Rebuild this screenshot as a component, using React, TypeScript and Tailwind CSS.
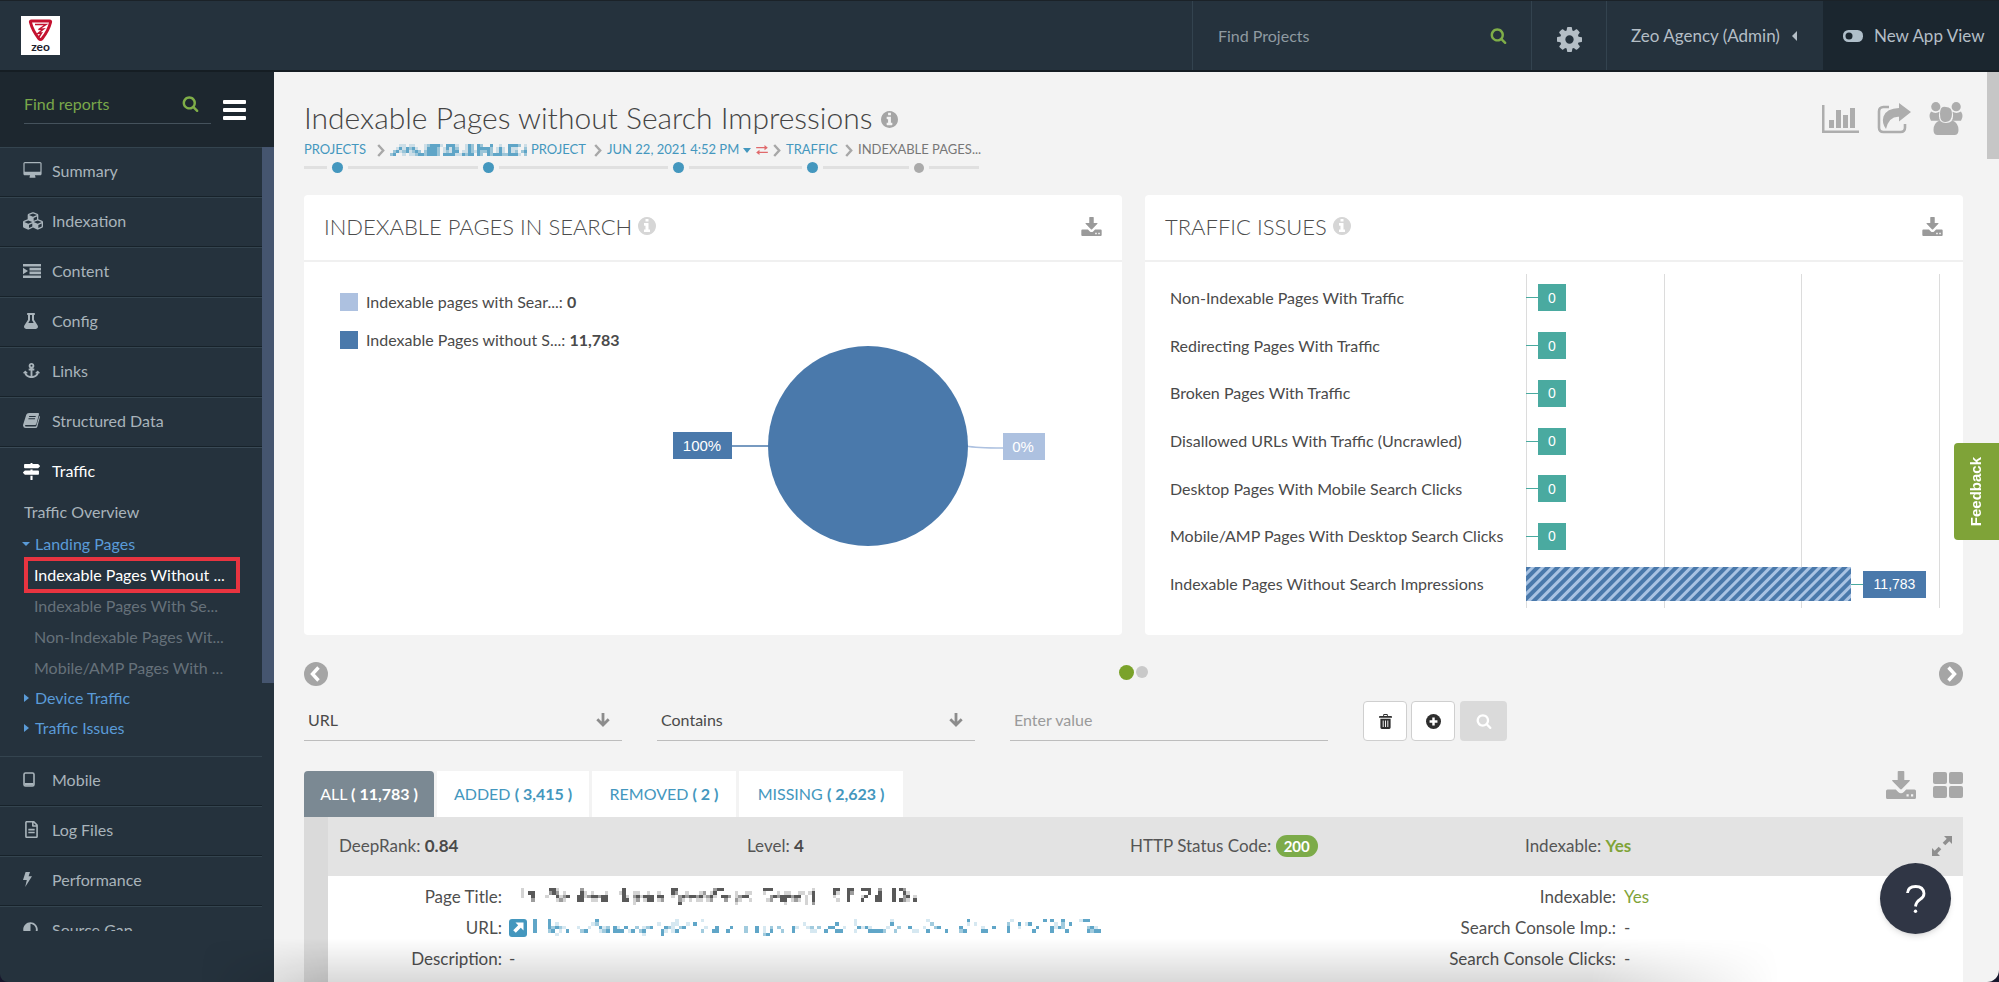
import type { ReactNode } from "react";
import { FaAnchor, FaCubes, FaFlask, FaMapSigns, FaAdjust, FaRegFileAlt } from "react-icons/fa";

type IconProps = { className?: string };

/* ---------- icons ---------- */

const SearchIcon = ({ className }: IconProps) => (
  <svg viewBox="0 0 1792 1792" className={className} fill="currentColor" aria-hidden="true">
    <path d="M1216 832q0-185-131.5-316.5t-316.5-131.5-316.5 131.5-131.5 316.5 131.5 316.5 316.5 131.5 316.5-131.5 131.5-316.5zm512 832q0 52-38 90t-90 38q-54 0-90-38l-343-342q-179 124-399 124-143 0-273.5-55.5t-225-150-150-225-55.5-273.5 55.5-273.5 150-225 225-150 273.5-55.5 273.5 55.5 225 150 150 225 55.5 273.5q0 220-124 399l343 343q37 37 37 90z" />
  </svg>
);

const CogIcon = ({ className }: IconProps) => (
  <svg viewBox="128 128 1536 1536" className={className} fill="currentColor" aria-hidden="true">
    <path d="M1152 896q0-106-75-181t-181-75-181 75-75 181 75 181 181 75 181-75 75-181zm512-109v222q0 12-8 23t-20 13l-185 28q-19 54-39 91 35 50 107 138 10 12 10 25t-9 23q-27 37-99 108t-94 71q-12 0-26-9l-138-108q-44 23-91 38-16 136-29 186-7 28-36 28h-222q-14 0-24.5-8.5t-11.5-21.5l-28-184q-49-16-90-37l-141 107q-10 9-25 9-14 0-25-11-126-114-165-168-7-10-7-23 0-12 8-23 15-21 51-66.5t54-70.5q-27-50-41-99l-183-27q-13-2-21-12.5t-8-23.5v-222q0-12 8-23t19-13l186-28q14-46 39-92-40-57-107-138-10-12-10-24 0-10 9-23 26-36 98.5-107.5t94.5-71.5q13 0 26 10l138 107q44-23 91-38 16-136 29-186 7-28 36-28h222q14 0 24.5 8.5t11.5 21.5l28 184q49 16 90 37l142-107q9-9 24-9 13 0 25 10 129 119 165 170 7 8 7 22 0 12-8 23-15 21-51 66.5t-54 70.5q26 50 41 98l183 28q13 2 21 12.5t8 23.5z" />
  </svg>
);

const InfoIcon = ({ className }: IconProps) => (
  <svg viewBox="128 128 1536 1536" className={className} fill="currentColor" aria-hidden="true">
    <path d="M1152 1376v-160q0-14-9-23t-23-9h-96v-512q0-14-9-23t-23-9h-320q-14 0-23 9t-9 23v160q0 14 9 23t23 9h96v320h-96q-14 0-23 9t-9 23v160q0 14 9 23t23 9h448q14 0 23-9t9-23zm-128-896v-160q0-14-9-23t-23-9h-192q-14 0-23 9t-9 23v160q0 14 9 23t23 9h192q14 0 23-9t9-23zm640 416q0 209-103 385.5t-279.5 279.5-385.5 103-385.5-103-279.5-279.5-103-385.5 103-385.5 279.5-279.5 385.5-103 385.5 103 279.5 279.5 103 385.5z" />
  </svg>
);

const DesktopIcon = ({ className }: IconProps) => (
  <svg viewBox="0 0 1920 1792" className={className} fill="currentColor" aria-hidden="true">
    <path d="M1792 992v-832q0-13-9.5-22.5t-22.5-9.5h-1600q-13 0-22.5 9.5t-9.5 22.5v832q0 13 9.5 22.5t22.5 9.5h1600q13 0 22.5-9.5t9.5-22.5zm128-832v1088q0 66-47 113t-113 47h-544q0 37 16 77.5t32 71 16 43.5q0 26-19 45t-45 19h-512q-26 0-45-19t-19-45q0-14 16-44t32-70 16-78h-544q-66 0-113-47t-47-113v-1088q0-66 47-113t113-47h1600q66 0 113 47t47 113z" />
  </svg>
);

const IndentIcon = ({ className }: IconProps) => (
  <svg viewBox="0 0 18 14" className={className} fill="currentColor" aria-hidden="true">
    <path d="M0 0h18v2.600H0zM6.500 3.800h11.500v2.600H6.500zM6.500 7.600h11.500v2.600H6.500zM0 11.400h18v2.600H0zM0 3.800l5 3.200-5 3.200z" />
  </svg>
);

const BookIcon = ({ className }: IconProps) => (
  <svg viewBox="0 0 18 16" className={className} fill="currentColor" aria-hidden="true">
    <path
      fillRule="evenodd"
      d="M6.400 0H16q1.300 0 1 1.200L14.200 11.600Q13.900 12.800 12.700 12.800H3q-1 0-1 .8t1 .8h10.300q.7 0 .9-.7L17.300 3.100q.9.400.6 1.500L15.300 14.400Q14.900 16 13.300 16H2.800Q.3 16 0 13.500q-.1-.7.2-1.500L3.400 1.900Q4 .2 6.400 0zM6.600 3.200l-.3 1h7l.3-1zM5.900 5.600l-.3 1h7l.3-1z"
    />
  </svg>
);

const TabletIcon = ({ className }: IconProps) => (
  <svg viewBox="0 0 12 15" className={className} aria-hidden="true">
    <rect x="1" y="1" width="10" height="13" rx="1.500" fill="none" stroke="currentColor" strokeWidth="1.600" />
    <path d="M1.500 11h9v2.500h-9z" fill="currentColor" />
  </svg>
);

const FlashIcon = ({ className }: IconProps) => (
  <svg viewBox="0 0 9 15" className={className} fill="currentColor" aria-hidden="true">
    <path d="M2.600 0H7L5.600 4.300H9L2.200 15l1.600-7H0z" />
  </svg>
);

const DownloadIcon = ({ className }: IconProps) => (
  <svg viewBox="0 0 30 28" className={className} fill="currentColor" aria-hidden="true">
    <path
      fillRule="evenodd"
      d="M12.500 0h5q.8 0 .8.8V9h4.900q1.200 0 .5.9l-7.800 8.200q-.9.900-1.800 0L6.300 9.900Q5.600 9 6.800 9h4.900V.8q0-.8.8-.8zM1.500 18.500h8.300l2.400 2.400q2.800 2.600 5.600 0l2.400-2.400h8.300q1.500 0 1.500 1.500v6.500q0 1.500-1.500 1.500h-27Q0 28 0 26.500V20q0-1.500 1.500-1.500zM20.500 23.200v2.200h2.200v-2.200zM25 23.200v2.200h2.200v-2.200z"
    />
  </svg>
);

const GridIcon = ({ className }: IconProps) => (
  <svg viewBox="0 0 30 26" className={className} fill="currentColor" aria-hidden="true">
    <rect width="14" height="12" rx="2" />
    <rect x="16" width="14" height="12" rx="2" />
    <rect y="14" width="14" height="12" rx="2" />
    <rect x="16" y="14" width="14" height="12" rx="2" />
  </svg>
);

const BarChartIcon = ({ className }: IconProps) => (
  <svg viewBox="0 0 37 28" className={className} fill="currentColor" aria-hidden="true">
    <path d="M0 0h2.500v25.500H37V28H0zM7 15h5v8H7zM14 5h5v18h-5zM21 10h5v13h-5zM28 3h5v20h-5z" />
  </svg>
);

const ShareIcon = ({ className }: IconProps) => (
  <svg viewBox="0 0 34 31" className={className} aria-hidden="true">
    <path
      d="M12 4H6.500Q2 4 2 8.500v16Q2 29 6.500 29h17q4.500 0 4.500-4.500V21"
      fill="none"
      stroke="currentColor"
      strokeWidth="2.600"
    />
    <path d="M22 0l12 9-12 9.500v-4.800q-10-.6-13 12.300-4.500-6-2.500-12.500Q9.500 5.300 22 5z" fill="currentColor" />
  </svg>
);

const GroupIcon = ({ className }: IconProps) => (
  <svg viewBox="0 0 34 33" className={className} fill="currentColor" aria-hidden="true">
    <circle cx="6.800" cy="4.700" r="4.600" />
    <circle cx="27.200" cy="4.700" r="4.600" />
    <path d="M2 9.500q4.500 2.600 8.500.3-1.500 5.500 1 9H2Q-1 14 2 9.500zM32 9.500q-4.500 2.600-8.500.3 1.500 5.500-1 9H32q3-4.800 0-9.300z" />
    <path d="M17 5q6 0 6 7t-6 8-6-8 6-7z" />
    <path d="M10.500 18.500q6.500 5 13 0 6 2.500 6 9.500 0 5-4 5h-17q-4 0-4-5 0-7 6-9.500z" />
  </svg>
);

const ChevronIcon = ({ className }: IconProps) => (
  <svg viewBox="0 0 8 13" className={className} fill="none" stroke="currentColor" strokeWidth="2.400" aria-hidden="true">
    <path d="M1.200 1l5 5.500-5 5.500" />
  </svg>
);

const SwapIcon = ({ className }: IconProps) => (
  <svg viewBox="0 0 14 12" className={className} fill="currentColor" aria-hidden="true">
    <path d="M0 2.500h10V0l4 3.200-4 3.200V4H0zM14 8H4V5.700L0 8.900 4 12V9.600h10z" />
  </svg>
);

const ArrowDownIcon = ({ className }: IconProps) => (
  <svg viewBox="0 0 14 14" className={className} fill="none" stroke="currentColor" strokeWidth="2.800" aria-hidden="true">
    <path d="M7 0v12M1.300 6.300L7 12l5.700-5.700" />
  </svg>
);

const CircleArrow = ({ flip }: { flip?: boolean }) => (
  <svg viewBox="0 0 24 24" className={flip ? "size-6 rotate-180" : "size-6"} aria-hidden="true">
    <circle cx="12" cy="12" r="12" fill="#a5a5a5" />
    <path d="M14.500 5.500L8.500 12l6 6.500" fill="none" stroke="#fff" strokeWidth="3.400" />
  </svg>
);

const TrashIcon = ({ className }: IconProps) => (
  <svg viewBox="0 0 14 16" className={className} fill="currentColor" aria-hidden="true">
    <path
      fillRule="evenodd"
      d="M4.500 2V1q0-1 1-1h3q1 0 1 1v1H13q1 0 1 1v1H0V3q0-1 1-1zm1 0h3V1h-3zM1.500 5h11v9.500q0 1.500-1.500 1.500H3q-1.500 0-1.500-1.500zM4 7v7h1V7zm2.500 0v7h1V7zM9 7v7h1V7z"
    />
  </svg>
);

const PlusCircleIcon = ({ className }: IconProps) => (
  <svg viewBox="0 0 16 16" className={className} aria-hidden="true">
    <circle cx="8" cy="8" r="8" fill="currentColor" />
    <path d="M8 3.800v8.400M3.800 8h8.400" stroke="#fff" strokeWidth="2.600" />
  </svg>
);

const ExpandIcon = ({ className }: IconProps) => (
  <svg viewBox="0 0 20 20" className={className} fill="currentColor" aria-hidden="true">
    <path d="M12 0h8v8l-2.700-2.700-4 4-2.600-2.600 4-4zM8 20H0v-8l2.700 2.700 4-4 2.600 2.600-4 4z" />
  </svg>
);

const ExternalIcon = () => (
  <svg viewBox="0 0 18 18" className="size-[18px]" aria-hidden="true">
    <rect width="18" height="18" rx="3" fill="#4497be" />
    <path d="M6.500 3.500h8v8l-2.700-2.700-5 5-2.600-2.600 5-5z" fill="#fff" />
  </svg>
);

const ToggleIcon = () => (
  <svg viewBox="0 0 20 12" className="h-3 w-5" aria-hidden="true">
    <rect width="20" height="12" rx="5.500" fill="#b0bfca" />
    <circle cx="6" cy="6" r="3.500" fill="#1b262f" />
  </svg>
);

const Logo = () => (
  <svg viewBox="0 0 39 39" className="size-[39px]" role="img" aria-label="Zeo">
    <rect width="39" height="39" fill="#fff" />
    <path
      d="M10.500 5h18q1.500 0 1 1.500-2 8-8.300 16-1.700 2-3.400 0-6.300-8-8.300-16Q9 5 10.500 5z"
      fill="#fff"
      stroke="#c4122f"
      strokeWidth="3"
    />
    <path d="M14 8.500h11l-7.500 5 5-.5-5.500 4.500 3.500-.5-2.500 4" fill="none" stroke="#c4122f" strokeWidth="1.500" />
    <text x="19.500" y="35" textAnchor="middle" className="font-[Lato,sans-serif] text-[12px] font-bold" fill="#20202c">
      zeo
    </text>
  </svg>
);

/* ---------- redacted strings, drawn as a mosaic ---------- */

const shades: Record<string, number> = { "#": 0.85, "+": 0.5, ".": 0.22 };

function Mosaic({ rows, className }: { rows: string[]; className: string }) {
  const cols = Math.max(...rows.map((r) => r.length));
  return (
    <svg
      viewBox={`0 0 ${cols} ${rows.length}`}
      preserveAspectRatio="none"
      shapeRendering="crispEdges"
      className={className}
      fill="currentColor"
      aria-hidden="true"
    >
      {rows.flatMap((row, y) =>
        row.split("").map((c, x) =>
          shades[c] ? <rect key={`${x}-${y}`} x={x} y={y} width="1" height="1" opacity={shades[c]} /> : null,
        ),
      )}
    </svg>
  );
}

const projectMosaic = [
  "   .. ..   .+###. ###.  .#+ #+  #  .  ###+ .",
  "  .#.#+#.  .###+ .#.#+  .#+ ####+ .#. #..  +",
  " +#.+#.+#+ +###+ .+.## ..#+.#++#+ .#. #.+ +#",
  "+#  . ..+##+###+ ####..#+## #+ #+###++###. +",
];

const titleMosaic = [
  " .       ##.      +           #             ##          +##           ###           .     ##  ##  ###  +   # #+  ",
  " . ##    +#+ .    #. .   .   .#  ..  .  .   #+  .   .+ .#     .  ..   .   . ..  .. .#     #.  #+    #  #   #  #. ",
  " .  #   .  #.+#  ##.+##+##    #. +#.### ##  . +#+##+#.+#. ##+ .+##      +#+###+## . #     .   #   .#  ##   #  +# .",
  "    +      .+.   ##  .. ##    ## .+ .## .+    +. . .. .+   +  +.  .    .+  ## .+. . #      .  #   #   ##   # #+. #",
  "                                 .            #               .             .     . +                            ",
];

const urlMosaic = [
  "#   #            #                     .      .                                         .         .         .          #           .        # #  #    .##  ",
  "#   # .         .+                .   ..  . #                             .        #    .         #          +         . .        +  # .#      . + #",
  "#   #+#+.   .  .  #.+ #. #  + .+#   #+. +#     .  #   #   +  # . + +   #.  .+ +  ##  .   #.#.    .  +  #   .  +#     #     .  #   #  .    #   #.#+      +#.",
  "#   +# . #   +#   .+# ### .# +#    #. .#      +  ##  #    +  # . #  +  #    ..  #  ##   .   ####+  +    ..  #    #   +#    ##     #      #    #   #     #+##",
  "      .                       .    #                           +#                                                                                            ",
];

/* ---------- sidebar ---------- */

function NavItem({ icon, children, active }: { icon: ReactNode; children: ReactNode; active?: boolean }) {
  return (
    <a
      href="#"
      className={
        active
          ? "flex h-[50px] items-center border-t border-[#3a4a56] pb-[3px] pl-[23px] text-white"
          : "flex h-[50px] items-center border-t border-b border-t-[#34444f] border-b-[#17222a] pb-[3px] pl-[23px] text-[#a9b4bb]"
      }
    >
      <span className="flex w-[29px] items-center">{icon}</span>
      {children}
    </a>
  );
}

function Sidebar() {
  return (
    <aside className="flex w-[274px] shrink-0 flex-col rounded-bl-lg bg-[#25323d] text-base">
      <div className="flex h-[75px] shrink-0 items-start bg-[#1d272f] pt-4 pl-6">
        <label className="flex h-9 w-[187px] items-center justify-between border-b border-[#45525c] pr-3 pb-1">
          <input
            aria-label="Find reports"
            placeholder="Find reports"
            className="w-36 bg-transparent outline-none placeholder:text-[#7aa74a]"
          />
          <SearchIcon className="size-[17px] text-[#7fae48]" />
        </label>
        <button aria-label="Toggle menu" className="mt-3 ml-3 flex w-[23px] flex-col gap-1">
          <span className="h-1 rounded-[1px] bg-white" />
          <span className="h-1 rounded-[1px] bg-white" />
          <span className="h-1 rounded-[1px] bg-white" />
        </button>
      </div>
      <div className="flex h-[784px] shrink-0 overflow-hidden">
        <nav className="flex-1">
          <NavItem icon={<DesktopIcon className="h-[17px] w-[19px]" />}>Summary</NavItem>
          <NavItem icon={<FaCubes className="size-5" />}>Indexation</NavItem>
          <NavItem icon={<IndentIcon className="h-3.5 w-[18px]" />}>Content</NavItem>
          <NavItem icon={<FaFlask className="size-4" />}>Config</NavItem>
          <NavItem icon={<FaAnchor className="size-[17px]" />}>Links</NavItem>
          <NavItem icon={<BookIcon className="h-[15px] w-[17px]" />}>Structured Data</NavItem>
          <NavItem active icon={<FaMapSigns className="size-[17px]" />}>Traffic</NavItem>
          <div className="flex flex-col pb-[13px] pl-6">
            <a href="#" className="mt-[3px] text-[#a9b4bb]">Traffic Overview</a>
            <a href="#" className="mt-2 flex items-center text-[#5a9bd8]">
              <span className="mr-1 -ml-0.5 w-2 border-x-4 border-t-4 border-x-transparent border-t-[#5a9bd8]" />
              <span className="pl-px">Landing Pages</span>
            </a>
            <a href="#" className="mt-px flex h-9 w-[216px] items-center border-4 border-[#e93440] pl-1.5 whitespace-nowrap text-white">
              Indexable Pages Without ...
            </a>
            <a href="#" className="-mt-[3px] ml-2.5 leading-[31px] text-[#66717a]">Indexable Pages With Se...</a>
            <a href="#" className="ml-2.5 leading-[31px] text-[#66717a]">Non-Indexable Pages Wit...</a>
            <a href="#" className="ml-2.5 leading-[31px] text-[#66717a]">Mobile/AMP Pages With ...</a>
            <a href="#" className="flex items-center leading-[30px] text-[#5a9bd8]">
              <span className="mr-1.5 border-y-4 border-l-[5px] border-y-transparent border-l-[#5a9bd8]" />
              Device Traffic
            </a>
            <a href="#" className="flex items-center leading-[30px] text-[#5a9bd8]">
              <span className="mr-1.5 border-y-4 border-l-[5px] border-y-transparent border-l-[#5a9bd8]" />
              Traffic Issues
            </a>
          </div>
          <NavItem icon={<TabletIcon className="h-[15px] w-3" />}>Mobile</NavItem>
          <NavItem icon={<FaRegFileAlt className="size-[17px]" />}>Log Files</NavItem>
          <NavItem icon={<FlashIcon className="h-[15px] w-[9px]" />}>Performance</NavItem>
          <NavItem icon={<FaAdjust className="size-[15px]" />}>Source Gap</NavItem>
        </nav>
        <div className="h-[536px] w-3 bg-[#45556f]" />
      </div>
    </aside>
  );
}

/* ---------- header ---------- */

function Header() {
  return (
    <header className="flex h-[72px] shrink-0 items-stretch justify-between border-t border-b-2 border-t-[#1b2228] border-b-[#151d23] bg-[#25323d] text-[17px] text-[#b4bec6]">
      <a href="#" className="flex items-center pl-[21px]">
        <Logo />
      </a>
      <div className="flex">
        <label className="flex w-[339px] items-center justify-between border-l border-[#33434f] pr-6 pl-[25px] text-base">
          <input aria-label="Find Projects" placeholder="Find Projects" className="bg-transparent outline-none placeholder:text-[#8f9aa1]" />
          <SearchIcon className="size-[17px] text-[#7fae48]" />
        </label>
        <button aria-label="Settings" className="flex w-[75px] items-center justify-center border-l border-[#33434f] pt-2">
          <CogIcon className="size-[25px]" />
        </button>
        <button className="flex w-[217px] items-center border-l border-[#33434f] pl-6">
          Zeo Agency (Admin)
          <span className="ml-3 border-y-[5px] border-r-[5px] border-y-transparent border-r-[#b4bec6]" />
        </button>
        <button className="flex w-44 items-center gap-[11px] bg-[#1b262f] pl-5 whitespace-nowrap">
          <ToggleIcon />
          New App View
        </button>
      </div>
    </header>
  );
}

/* ---------- main content ---------- */

const issues = [
  "Non-Indexable Pages With Traffic",
  "Redirecting Pages With Traffic",
  "Broken Pages With Traffic",
  "Disallowed URLs With Traffic (Uncrawled)",
  "Desktop Pages With Mobile Search Clicks",
  "Mobile/AMP Pages With Desktop Search Clicks",
];

function Crumb({ width, trail = "w-5", last, children }: { width: string; trail?: string; last?: boolean; children: ReactNode }) {
  return (
    <li className={`flex flex-col gap-0.5 ${width}`}>
      <span className="flex h-5 items-center whitespace-nowrap">
        {children}
        {!last && <ChevronIcon className="mr-[5px] ml-auto h-[13px] w-2 shrink-0 text-[#a8a8a8]" />}
      </span>
      <span className="flex h-[11px] items-center">
        <span className="h-[3px] flex-1 bg-[#e0e0e0]" />
        <span className={last ? "mx-[5px] size-2.5 rounded-full bg-[#aaaaaa]" : "mx-[5px] size-[11px] rounded-full bg-[#4497be]"} />
        <span className="h-[3px] flex-1 bg-[#e0e0e0]" />
        {!last && <span className={`h-[3px] bg-[#e0e0e0] ${trail}`} />}
      </span>
    </li>
  );
}

function Card({ title, children }: { title: string; children: ReactNode }) {
  return (
    <section className="flex h-[440px] flex-col rounded bg-white">
      <div className="flex h-[67px] shrink-0 items-center border-b-2 border-[#f0f0f0] px-5 pb-[3px]">
        <h2 className="text-[22px] font-light text-[#4c4c4c]">{title}</h2>
        <InfoIcon className="ml-1.5 size-[18px] text-[#d6d6d6]" />
        <button aria-label={`Download ${title}`} className="ml-auto">
          <DownloadIcon className="h-[19px] w-[21px] text-[#9a9a9a]" />
        </button>
      </div>
      {children}
    </section>
  );
}

function SearchCard() {
  return (
    <Card title="INDEXABLE PAGES IN SEARCH">
      <div className="flex flex-1 justify-between pt-7 pr-[77px] pl-9">
        <ul className="flex flex-col gap-[14px] text-base whitespace-nowrap text-[#4a4a4a]">
          <li className="flex h-6 items-center gap-2">
            <span className="size-[18px] bg-[#adc1e0]" />
            <span>Indexable pages with Sear...: <b>0</b></span>
          </li>
          <li className="flex h-6 items-center gap-2">
            <span className="size-[18px] bg-[#4a79ab]" />
            <span>Indexable Pages without S...: <b>11,783</b></span>
          </li>
        </ul>
        <svg viewBox="0 0 372 200" className="mt-14 h-[200px] w-[372px] shrink-0 font-['Liberation_Sans',sans-serif] text-[15px]">
          <path d="M59 100h40" stroke="#4a79ab" strokeWidth="1.500" />
          <path d="M293 100q10 2 37 2" stroke="#adc1e0" strokeWidth="1.500" fill="none" />
          <circle cx="195" cy="100" r="100" fill="#4a79ab" />
          <rect y="86" width="59" height="27" fill="#4a79ab" />
          <text x="29" y="105" textAnchor="middle" fill="#fff">100%</text>
          <rect x="330" y="87" width="42" height="27" fill="#adc1e0" />
          <text x="350" y="106" textAnchor="middle" fill="#fff">0%</text>
        </svg>
      </div>
    </Card>
  );
}

function IssuesCard() {
  return (
    <Card title="TRAFFIC ISSUES">
      <div className="relative mt-3 mr-[23px] flex h-[334px] flex-col text-base text-[#4a4a4a]">
        <div className="absolute inset-y-0 right-0 left-[381px] grid grid-cols-3 border-l border-[#dcdcdc]">
          <span className="border-r border-[#dcdcdc]" />
          <span className="border-r border-[#dcdcdc]" />
          <span className="border-r border-[#dcdcdc]" />
        </div>
        {issues.map((label) => (
          <div key={label} className="relative flex flex-1 items-center">
            <span className="w-[381px] shrink-0 pl-[25px] whitespace-nowrap">{label}</span>
            <span className="h-px w-3 bg-[#4aaaa0]" />
            <span className="flex h-[27px] w-7 items-center justify-center bg-[#4aaaa0] font-['Liberation_Sans',sans-serif] text-sm text-white">0</span>
          </div>
        ))}
        <div className="relative flex flex-1 items-center">
          <span className="w-[381px] shrink-0 pl-[25px] whitespace-nowrap">Indexable Pages Without Search Impressions</span>
          <span className="flex flex-1 items-center pr-3.5">
            <span className="h-[34px] flex-1 bg-[repeating-linear-gradient(135deg,#4a79ab_0px,#4a79ab_3px,#a9c3e3_4px,#a9c3e3_6px,#4a79ab_7px)]" />
            <span className="h-px w-3 bg-[#4aaaa0]" />
            <span className="flex h-[27px] w-[63px] items-center justify-center bg-[#4a79ab] font-['Liberation_Sans',sans-serif] text-sm text-white">11,783</span>
          </span>
        </div>
      </div>
    </Card>
  );
}

function FilterSelect({ label, value }: { label: string; value: string }) {
  return (
    <label className="flex h-[38px] w-[318px] items-center border-b border-[#bdbdbd] pr-3 pb-1 pl-1">
      <select aria-label={label} className="flex-1 appearance-none bg-transparent text-[#4a4a4a] outline-none">
        <option>{value}</option>
      </select>
      <ArrowDownIcon className="size-3.5 text-[#8c8c8c]" />
    </label>
  );
}

const tabs = [
  { name: "ALL", count: "11,783", width: "w-[130px]" },
  { name: "ADDED", count: "3,415", width: "w-[152px]" },
  { name: "REMOVED", count: "2", width: "w-[144px]" },
  { name: "MISSING", count: "2,623", width: "w-[164px]" },
];

function Results() {
  return (
    <section className="text-base">
      <div className="flex items-end justify-between">
        <div role="tablist" className="flex gap-[3px]">
          {tabs.map((t, i) => (
            <button
              key={t.name}
              role="tab"
              aria-selected={i === 0}
              className={`h-[46px] whitespace-nowrap ${t.width} ${i === 0 ? "rounded-t bg-[#7b8993] text-white" : "bg-white text-[#4497be]"}`}
            >
              {t.name} <b>( {t.count} )</b>
            </button>
          ))}
        </div>
        <div className="flex items-center gap-[17px] pb-[18px] text-[#a8a8a8]">
          <button aria-label="Download"><DownloadIcon className="h-7 w-[30px]" /></button>
          <button aria-label="Grid view"><GridIcon className="h-[26px] w-[30px]" /></button>
        </div>
      </div>
      <div className="border-l-24 border-[#dadada] bg-white pb-8 text-[17px]">
        <div className="flex h-[59px] items-center bg-[#e3e3e3] pr-[11px] pb-px pl-[11px] text-[#555]">
          <span className="shrink-0 basis-[408px]">DeepRank: <b className="text-[#4a4a4a]">0.84</b></span>
          <span className="shrink-0 basis-[383px]">Level: <b className="text-[#4a4a4a]">4</b></span>
          <span className="shrink-0 basis-[395px]">
            HTTP Status Code: <b className="inline-block rounded-full bg-[#7cab49] px-2 text-[15px] leading-[22px] text-white">200</b>
          </span>
          <span>Indexable: <b className="text-[#7fa338]">Yes</b></span>
          <button aria-label="Expand" className="ml-auto"><ExpandIcon className="size-5 text-[#8f8f8f]" /></button>
        </div>
        <div className="flex pt-[5px] text-[#4f4f4f]">
          <dl className="grid flex-1 grid-cols-[174px_1fr] gap-x-[7px] leading-[31px] whitespace-nowrap">
            <dt className="text-right">Page Title:</dt>
            <dd className="flex items-center pl-2"><Mosaic rows={titleMosaic} className="h-[17px] w-[400px] text-[#3c3c3c]" /></dd>
            <dt className="text-right">URL:</dt>
            <dd className="flex items-center gap-1.5">
              <ExternalIcon />
              <Mosaic rows={urlMosaic} className="h-[17px] w-[572px] text-[#4497be]" />
            </dd>
            <dt className="text-right">Description:</dt>
            <dd>-</dd>
          </dl>
          <dl className="grid w-[526px] grid-cols-[179px_1fr] gap-x-2 leading-[31px] whitespace-nowrap">
            <dt className="text-right">Indexable:</dt>
            <dd className="text-[#7fa338]">Yes</dd>
            <dt className="text-right">Search Console Imp.:</dt>
            <dd>-</dd>
            <dt className="text-right">Search Console Clicks:</dt>
            <dd>-</dd>
          </dl>
        </div>
      </div>
    </section>
  );
}

export default function App() {
  return (
    <div className="relative flex h-screen flex-col overflow-hidden bg-[#17162c] font-[Lato,sans-serif]">
      <Header />
      <div className="flex min-h-0 flex-1">
        <Sidebar />
        <main className="min-w-0 flex-1 overflow-hidden rounded-br-xl bg-[#f3f3f3] pt-6 pr-9 pl-[30px]">
          <div className="flex items-start justify-between">
            <div>
              <h1 className="flex h-[42px] items-center gap-2 text-[30px] font-light text-[#444]">
                Indexable Pages without Search Impressions
                <InfoIcon className="mt-1 size-[17px] text-[#a5a5a5]" />
              </h1>
              <ol className="mt-0.5 flex text-[13px] text-[#4497be]">
                <Crumb width="w-[86px]"><a href="#">PROJECTS</a></Crumb>
                <Crumb width="w-[217px]">
                  <a href="#" className="flex items-center gap-1">
                    <Mosaic rows={projectMosaic} className="h-3 w-[137px]" />
                    PROJECT
                  </a>
                </Crumb>
                <Crumb width="w-[179px]" trail="w-9">
                  <a href="#">JUN 22, 2021 4:52 PM</a>
                  <span className="ml-1 border-x-4 border-t-[5px] border-x-transparent border-t-[#4497be]" />
                  <SwapIcon className="ml-1 h-2.5 w-3.5 shrink-0 text-[#e0696b]" />
                </Crumb>
                <Crumb width="w-[72px]"><a href="#">TRAFFIC</a></Crumb>
                <Crumb width="w-[121px]" last><span className="text-[#777]">INDEXABLE PAGES...</span></Crumb>
              </ol>
            </div>
            <div className="flex items-center gap-[18px] pt-1.5 text-[#adadad]">
              <button aria-label="Charts"><BarChartIcon className="h-7 w-[37px]" /></button>
              <button aria-label="Share"><ShareIcon className="h-[31px] w-[34px]" /></button>
              <button aria-label="Team"><GroupIcon className="h-[33px] w-[34px]" /></button>
            </div>
          </div>

          <div className="mt-[22px] grid grid-cols-2 gap-[23px]">
            <SearchCard />
            <IssuesCard />
          </div>

          <div className="mt-[27px] flex h-6 items-center justify-between">
            <button aria-label="Previous"><CircleArrow /></button>
            <div className="flex items-center gap-0.5 pb-1">
              <button aria-label="Slide 1" className="size-[15px] rounded-full bg-[#7aa22a]" />
              <button aria-label="Slide 2" className="size-3 rounded-full bg-[#c9c9c9]" />
            </div>
            <button aria-label="Next"><CircleArrow flip /></button>
          </div>

          <form className="mt-[15px] mb-[30px] flex h-10 items-end gap-[35px] text-base">
            <FilterSelect label="Field" value="URL" />
            <FilterSelect label="Condition" value="Contains" />
            <input
              aria-label="Value"
              placeholder="Enter value"
              className="h-[38px] w-[318px] border-b border-[#bdbdbd] bg-transparent pb-1 pl-1 outline-none placeholder:text-[#9a9a9a]"
            />
            <div className="flex gap-1">
              <button type="button" aria-label="Delete" className="flex h-10 w-11 items-center justify-center rounded-sm border border-[#cfcfcf] bg-white text-[#2e2e2e]">
                <TrashIcon className="h-[15px] w-[13px]" />
              </button>
              <button type="button" aria-label="Add" className="flex h-10 w-11 items-center justify-center rounded-sm border border-[#cfcfcf] bg-white text-[#2e2e2e]">
                <PlusCircleIcon className="size-[15px]" />
              </button>
              <button type="button" aria-label="Search" className="ml-px flex h-10 w-[47px] items-center justify-center rounded-sm bg-[#dadada] text-white">
                <SearchIcon className="size-4" />
              </button>
            </div>
          </form>

          <Results />
        </main>
      </div>

      <div className="absolute top-[72px] right-0 h-[87px] w-3 bg-[#c6c6c6]" />
      <div className="pointer-events-none absolute bottom-0 left-[200px] h-11 w-[1580px] bg-linear-to-t from-black/15 to-transparent [mask-image:linear-gradient(to_right,transparent,black_8%,black_88%,transparent)]" />
      <button className="absolute top-[443px] right-0 flex h-[97px] w-[45px] items-center justify-center rounded-l bg-[#7fa338] font-['Liberation_Sans',sans-serif] text-[15px] font-bold text-white">
        <span className="rotate-180 [writing-mode:vertical-rl]">Feedback</span>
      </button>
      <button aria-label="Help" className="absolute right-12 bottom-12 flex size-[71px] items-center justify-center rounded-full bg-[#303645] shadow-md">
        <svg viewBox="0 0 20 28" className="h-7 w-5" fill="none" stroke="#fff" strokeWidth="2.800" aria-hidden="true">
          <path d="M1.500 8Q2 1.500 9.700 1.500T18 8.500Q18 12 14 14.500T9.500 21.500" />
          <circle cx="9.500" cy="26.300" r="1.700" fill="#fff" stroke="none" />
        </svg>
      </button>
    </div>
  );
}
